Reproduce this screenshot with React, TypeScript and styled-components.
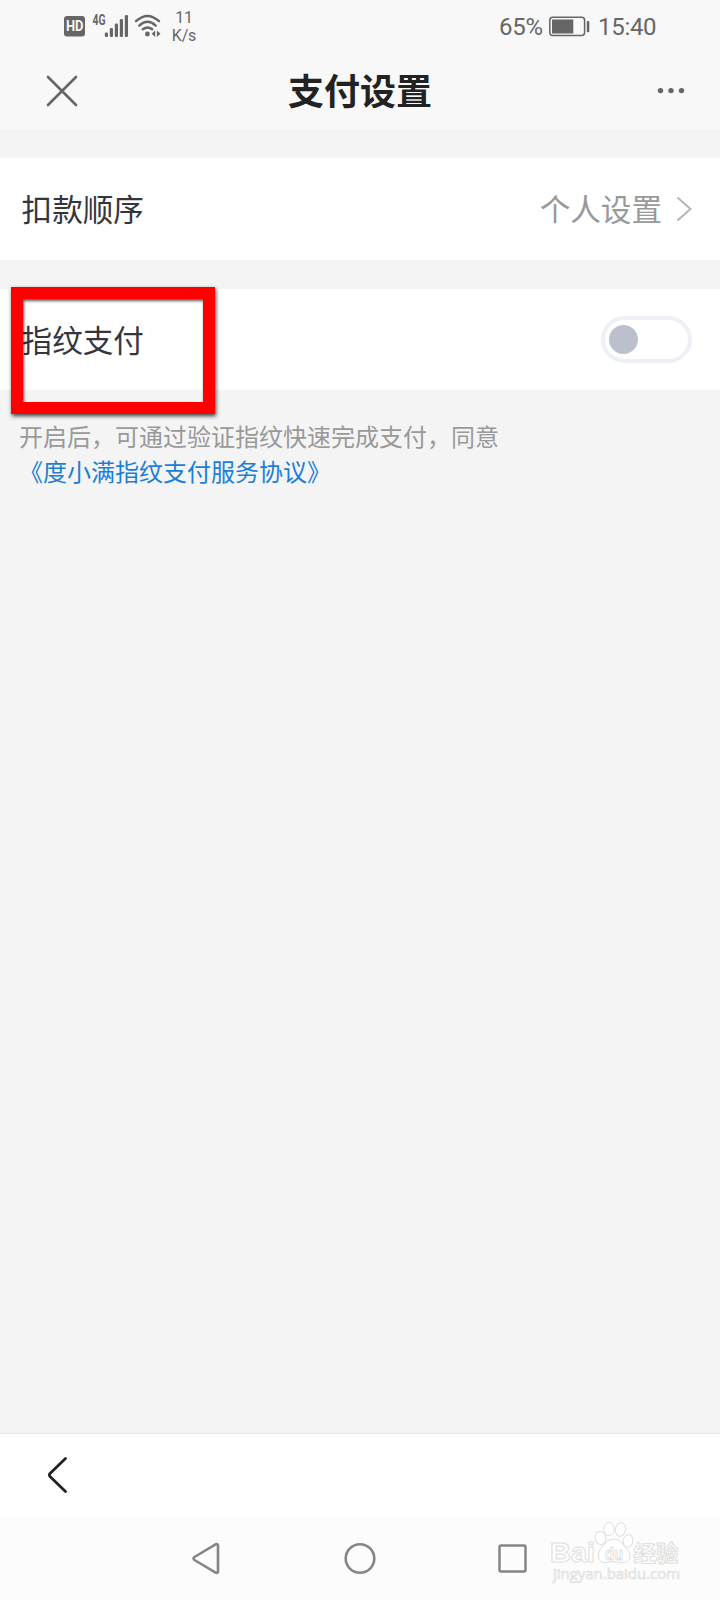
import React from "react";
import styled, { createGlobalStyle } from "styled-components";

const GlobalStyle = createGlobalStyle`
  * { box-sizing: border-box; }
  body {
    margin: 0;
    background: #f4f4f4;
    font-family: Roboto, "Noto Sans CJK SC", sans-serif;
  }
`;

const Screen = styled.div`
  width: 720px;
  height: 1600px;
  display: flex;
  flex-direction: column;
  overflow: hidden;
  background: #f4f4f4;
`;

const StatusBar = styled.div`
  height: 53px;
  flex: none;
  display: flex;
  justify-content: space-between;
  padding: 0 64px 0 60px;
  background: #f8f8f8;
  color: #666;
`;

const StatusGroup = styled.div`
  display: flex;
  align-items: center;
  height: 53px;
`;

const NetSpeed = styled.div`
  width: 30px;
  margin-left: 7px;
  font-size: 16px;
  line-height: 18px;
  letter-spacing: -0.2px;
  text-align: center;
  padding-top: 1px;
`;

const StatusText = styled.span<{ $width: number }>`
  width: ${(p) => p.$width}px;
  padding-top: 2px;
  font-size: 24px;
  line-height: 51px;
  letter-spacing: -0.3px;
  white-space: nowrap;
`;

const Clock = styled(StatusText)`
  padding-left: 7px;
`;

const Header = styled.header`
  height: 76px;
  flex: none;
  display: grid;
  grid-template-columns: 100px 1fr 100px;
  align-items: center;
  background: #f8f8f8;
`;

const Title = styled.h1`
  margin: 0;
  padding-top: 5px;
  text-align: center;
  font-size: 36px;
  line-height: 71px;
  font-weight: 700;
  color: #222;
`;

const IconButton = styled.button<{ $left?: number }>`
  display: flex;
  border: 0;
  padding: 0;
  background: none;
  margin-left: ${(p) => p.$left ?? 0}px;
`;

const Row = styled.section<{ $top: number; $height: number }>`
  height: ${(p) => p.$height}px;
  margin-top: ${(p) => p.$top}px;
  flex: none;
  display: flex;
  align-items: center;
  justify-content: space-between;
  padding: 0 28px 0 21px;
  background: #fff;
`;

const Label = styled.span`
  position: relative;
  padding: 4px 0 0 0.6px;
  font-size: 30.6px;
  line-height: 44px;
  color: #35353d;
`;

const Value = styled.span`
  display: flex;
  align-items: center;
  gap: 14px;
  font-size: 30.6px;
  line-height: 44px;
  color: #999;
`;

const ValueText = styled.span`
  padding-top: 4px;
`;

const Toggle = styled.div`
  width: 91px;
  height: 47px;
  display: flex;
  align-items: center;
  padding-left: 4px;
  border: 4px solid #edf0f5;
  border-radius: 24px;
  background: #fff;
`;

const Knob = styled.div`
  width: 29px;
  height: 29px;
  border-radius: 50%;
  background: #bcc0cc;
`;

const Highlight = styled.div`
  position: absolute;
  left: -10px;
  top: -29px;
  width: 204px;
  height: 127px;
  border: 12px solid #fe0000;
  box-shadow: 1px 2px 4px rgba(0, 0, 0, 0.75), inset 1px 2px 3px rgba(0, 0, 0, 0.65);
`;

const Hint = styled.p`
  flex: 1;
  margin: 0;
  padding: 31px 0 0 19px;
  font-size: 24px;
  line-height: 34.6px;
  color: #999;
`;

const Agreement = styled.span`
  display: block;
  color: #1b7fd6;
`;

const Footer = styled.footer`
  height: 85px;
  flex: none;
  display: flex;
  align-items: center;
  padding: 0 0 2px 46px;
  border-top: 1px solid #e3e3e3;
  background: #fff;
`;

const NavBar = styled.nav`
  height: 82px;
  flex: none;
  display: flex;
  align-items: center;
  padding-left: 190px;
  gap: 121px;
  background: #fcfcfc;
`;

const Watermark = styled.svg`
  margin-left: -102px;
  flex: none;
`;

function Indicators() {
  return (
    <svg width="102" height="53" viewBox="60 0 102 53" fill="#666">
      <rect x="64" y="16" width="21" height="20.5" rx="3" />
      <text x="66" y="31.3" fontFamily="Roboto" fontSize="14" fontWeight="700" fill="#f8f8f8" textLength="17.500" lengthAdjust="spacingAndGlyphs">HD</text>
      <text x="92.5" y="25" fontFamily="Roboto" fontSize="14" fontWeight="700" textLength="13" lengthAdjust="spacingAndGlyphs">4G</text>
      <rect x="104.8" y="32.5" width="3.2" height="4.5" rx="1.2" />
      <rect x="109.8" y="28" width="3.2" height="9" rx="1.2" />
      <rect x="114.8" y="23.5" width="3.2" height="13.5" rx="1.2" />
      <rect x="119.8" y="19" width="3.2" height="18" rx="1.2" />
      <rect x="124.8" y="15" width="3.2" height="22" rx="1.2" />
      <g fill="none" stroke="#666" strokeWidth="2.4" strokeLinecap="round">
        <path d="M136 21.2Q147.5 10.8 159 21.2" />
        <path d="M139.3 25.6Q147.5 18 155.7 25.6" />
        <path d="M142.8 29.3Q147.5 25.6 152.2 29.3" />
      </g>
      <circle cx="147.4" cy="34" r="2.4" />
      <path d="M155.2 30.5v6.4l-3.6-3.2zM156.9 30.5v6.4l3.6-3.2z" />
    </svg>
  );
}

function Battery() {
  return (
    <svg width="42" height="22" viewBox="0 0 42 22" fill="none">
      <rect x="0.8" y="1.3" width="34.8" height="18.2" rx="3" stroke="#666" strokeWidth="1.5" />
      <rect x="3" y="3.500" width="21.3" height="14" fill="#666" />
      <rect x="37.8" y="5" width="2.5" height="11.2" rx="1" fill="#666" />
    </svg>
  );
}

function BaiduMark() {
  return (
    <Watermark width="140" height="82" viewBox="548 1518 140 82" fill="#fff" stroke="#dedede" strokeWidth="1">
      <text x="551" y="1562" fontSize="28" fontWeight="700" fontFamily="Liberation Sans, sans-serif" textLength="45" lengthAdjust="spacingAndGlyphs">Bai</text>
      <text x="634.500" y="1560.500" fontSize="22" fontWeight="700" fontFamily="Noto Sans CJK SC, sans-serif" textLength="45" lengthAdjust="spacingAndGlyphs">经验</text>
      <text x="554" y="1579" fontSize="14" strokeWidth="0.7" fontFamily="Open Sans, sans-serif" textLength="127" lengthAdjust="spacingAndGlyphs">jingyan.baidu.com</text>
      <ellipse cx="601.5" cy="1538" rx="5.2" ry="6.6" transform="rotate(-12 601.5 1538)" />
      <ellipse cx="610" cy="1529" rx="5" ry="6.7" />
      <ellipse cx="621.5" cy="1529.5" rx="5" ry="6.8" transform="rotate(10 621.5 1529.5)" />
      <ellipse cx="629" cy="1541" rx="4.8" ry="6.3" transform="rotate(12 629 1541)" />
      <path d="M607 1542C612 1538 619 1538 623 1543C626 1548 631 1550 631 1556C631 1561 627 1563 622 1562.500C617 1561.500 613 1561.500 608 1562.500C602 1563 599 1560 599.500 1554C600 1549 604 1547 607 1542Z" />
      <text x="606" y="1560" fontSize="18" fontWeight="700" fontFamily="Liberation Sans, sans-serif" textLength="18" lengthAdjust="spacingAndGlyphs">du</text>
    </Watermark>
  );
}

export default function App() {
  return (
    <>
      <GlobalStyle />
      <Screen>
        <StatusBar>
          <StatusGroup>
            <Indicators />
            <NetSpeed>11<br />K/s</NetSpeed>
          </StatusGroup>
          <StatusGroup>
            <StatusText $width={50}>65%</StatusText>
            <Battery />
            <Clock $width={65}>15:40</Clock>
          </StatusGroup>
        </StatusBar>
        <Header>
          <IconButton $left={46} aria-label="关闭">
            <svg width="32" height="32" viewBox="0 0 32 32" fill="none" stroke="#666" strokeWidth="2.6" strokeLinecap="round">
              <path d="M2 2L30 30M30 2L2 30" />
            </svg>
          </IconButton>
          <Title>支付设置</Title>
          <IconButton $left={37} aria-label="更多">
            <svg width="28" height="8" viewBox="0 0 28 8" fill="#666">
              <circle cx="3.500" cy="3.600" r="2.700" />
              <circle cx="14" cy="3.600" r="2.700" />
              <circle cx="24.500" cy="3.600" r="2.700" />
            </svg>
          </IconButton>
        </Header>
        <Row $top={29} $height={102}>
          <Label>扣款顺序</Label>
          <Value>
            <ValueText>个人设置</ValueText>
            <svg width="16" height="26" viewBox="0 0 16 26" fill="none" stroke="#b5b5b5" strokeWidth="2">
              <path d="M1.500 1.500L14.500 13L1.500 24.500" />
            </svg>
          </Value>
        </Row>
        <Row $top={29} $height={101}>
          <Label>指纹支付<Highlight /></Label>
          <Toggle><Knob /></Toggle>
        </Row>
        <Hint>
          开启后，可通过验证指纹快速完成支付，同意
          <Agreement>《度小满指纹支付服务协议》</Agreement>
        </Hint>
        <Footer>
          <IconButton aria-label="返回">
            <svg width="24" height="38" viewBox="0 0 24 38" fill="none" stroke="#222" strokeWidth="2.800" strokeLinecap="round" strokeLinejoin="round">
              <path d="M19.500 2.500L4 17.500Q2.700 19 4 20.500L19.500 35.500" />
            </svg>
          </IconButton>
        </Footer>
        <NavBar>
          <svg width="32" height="34" viewBox="0 0.500 32 34" fill="none" stroke="#858585" strokeWidth="2.600" strokeLinejoin="round">
            <path d="M26 2.700L4.500 15.500Q2.500 17 4.500 18.500L26 31.300Q28 31.800 28 30V4Q28 2.200 26 2.700Z" />
          </svg>
          <svg width="34" height="34" viewBox="0 0.500 34 34" fill="none" stroke="#858585" strokeWidth="2.600">
            <circle cx="17" cy="17" r="14.300" />
          </svg>
          <svg width="30" height="30" viewBox="0.500 0.500 30 30" fill="none" stroke="#858585" strokeWidth="2.500">
            <rect x="2" y="2" width="26" height="26" rx="1.500" />
          </svg>
          <BaiduMark />
        </NavBar>
      </Screen>
    </>
  );
}
